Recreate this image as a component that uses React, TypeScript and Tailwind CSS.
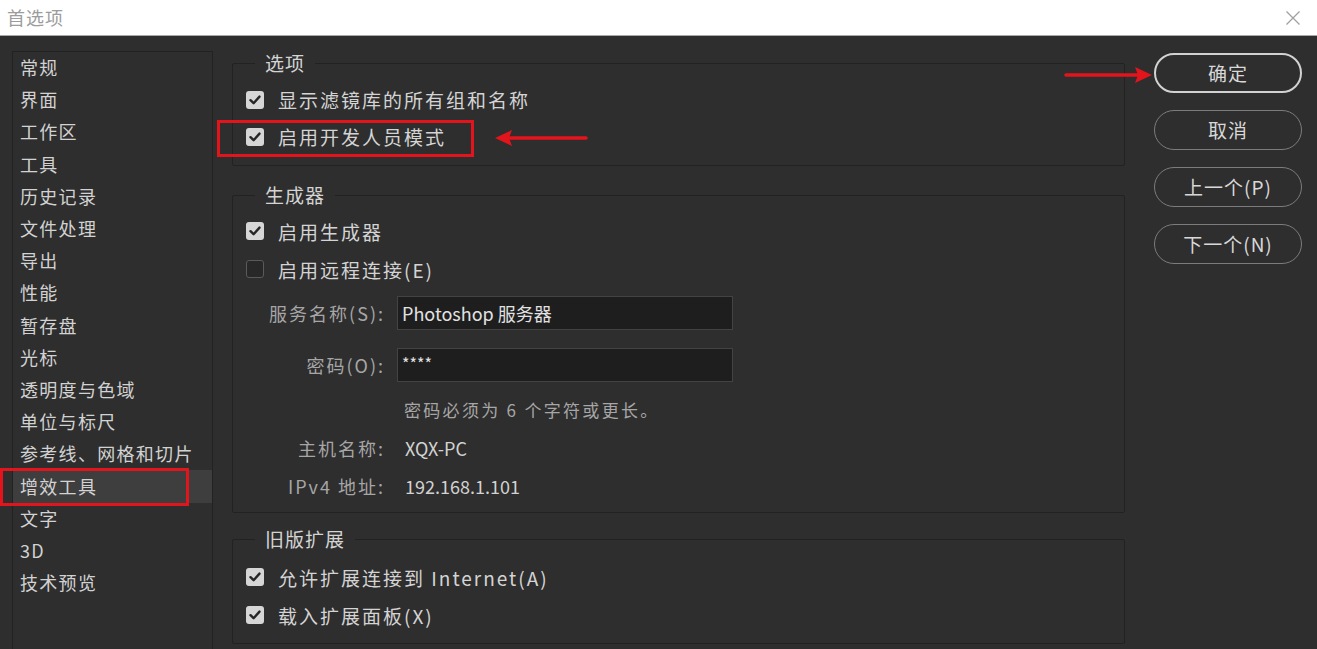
import type { ReactNode } from "react";

const FONT = { fontFamily: '"Noto Sans CJK SC", "Noto Sans", sans-serif' };

const NAV = [
  "常规",
  "界面",
  "工作区",
  "工具",
  "历史记录",
  "文件处理",
  "导出",
  "性能",
  "暂存盘",
  "光标",
  "透明度与色域",
  "单位与标尺",
  "参考线、网格和切片",
  "增效工具",
  "文字",
  "3D",
  "技术预览",
];

function Checkbox({ checked }: { checked: boolean }) {
  return checked ? (
    <span className="w-[18px] h-[18px] rounded-[3px] bg-[#d6d6d6] flex items-center justify-center shrink-0">
      <svg width="14" height="14" viewBox="0 0 14 14">
        <path d="M2.5 7.2 L5.6 10.2 L11.5 3.6" fill="none" stroke="#262626" strokeWidth="2.4" strokeLinecap="round" strokeLinejoin="round" />
      </svg>
    </span>
  ) : (
    <span className="w-[18px] h-[18px] rounded-[3px] border-[1.5px] border-[#5a5a5a] bg-[#282828] shrink-0" />
  );
}

function CheckRow({ checked, label, tight }: { checked: boolean; label: string; tight?: boolean }) {
  return (
    <div className={`${tight ? "h-[37px]" : "h-[38px]"} flex items-center pl-[13px] gap-[14px]`}>
      <Checkbox checked={checked} />
      <span className="text-[19px] tracking-[2px] text-[#d4d4d4] leading-none">{label}</span>
    </div>
  );
}

function Group({ title, children, className }: { title: string; children: ReactNode; className: string }) {
  return (
    <fieldset className={`border border-[#222222] rounded-[2px] ${className}`}>
      <legend className="ml-[22px] px-[10px] text-[19px] leading-[26px] tracking-[1px] text-[#d4d4d4]">{title}</legend>
      {children}
    </fieldset>
  );
}

function Label({ children }: { children: ReactNode }) {
  return (
    <span className="w-[152px] text-right text-[18px] tracking-[2px] text-[#a6a6a6] shrink-0">{children}</span>
  );
}

function NavButton({ label, primary }: { label: string; primary?: boolean }) {
  return (
    <button
      className={`h-[40px] w-full rounded-full text-[19px] tracking-[1px] text-[#d8d8d8] ${
        primary ? "border-2 border-[#d2d2d2]" : "border-[1.5px] border-[#7c7c7c]"
      }`}
    >
      {label}
    </button>
  );
}

export default function App() {
  return (
    <div className="w-[1317px] h-[649px] overflow-hidden bg-[#2e2e2e] relative" style={FONT}>
      {/* Title bar */}
      <div className="h-[36px] bg-white border-b border-[#a8a8a8] flex items-center justify-between pl-[7px] pr-[16px]">
        <span className="text-[18px] text-[#9c9c9c] tracking-[1px]">首选项</span>
        <svg width="16" height="16" viewBox="0 0 16 16">
          <path d="M1.5 1.5 L14.5 14.5 M14.5 1.5 L1.5 14.5" stroke="#a0a0a0" strokeWidth="1.3" />
        </svg>
      </div>

      <div className="flex pl-[12px]">
        {/* Sidebar */}
        <div className="w-[201px] h-[620px] mt-[15px] border border-[#222222] shrink-0">
          {NAV.map((n) => (
            <div
              key={n}
              className={`h-[32.2px] flex items-center pl-[7px] pb-[1px] text-[18px] tracking-[1.3px] text-[#d2d2d2] ${
                n === "增效工具" ? "bg-[#3e3e3e]" : ""
              }`}
            >
              {n}
            </div>
          ))}
        </div>

        {/* Content */}
        <div className="w-[893px] ml-[19px] shrink-0">
          <Group title="选项" className="mt-[14px] pt-[5px] pb-[10px]">
            <CheckRow checked tight label="显示滤镜库的所有组和名称" />
            <CheckRow checked tight label="启用开发人员模式" />
          </Group>

          <Group title="生成器" className="mt-[16px] pt-[4px] pb-[7px]">
            <CheckRow checked label="启用生成器" />
            <CheckRow checked={false} label="启用远程连接(E)" />
            <div className="flex items-center mt-[8px]">
              <Label>服务名称(S):</Label>
              <div className="ml-[12px] w-[336px] h-[34px] bg-[#1e1e1e] border border-[#434343] flex items-center pl-[4px] text-[18px] text-[#e2e2e2]">
                Photoshop 服务器
              </div>
            </div>
            <div className="flex items-center mt-[18px]">
              <Label>密码(O):</Label>
              <div className="ml-[12px] w-[336px] h-[34px] bg-[#1e1e1e] border border-[#434343] flex items-start pt-[2px] pl-[4px] text-[16px] text-[#e2e2e2]">
                ****
              </div>
            </div>
            <div className="h-[38px] mt-[9px] flex items-center pl-[171px] text-[17px] tracking-[2.3px] text-[#a6a6a6]">
              密码必须为 6 个字符或更长。
            </div>
            <div className="h-[38px] flex items-center">
              <Label>主机名称:</Label>
              <span className="ml-[20px] text-[18px] text-[#d2d2d2]">XQX-PC</span>
            </div>
            <div className="h-[38px] flex items-center">
              <Label>IPv4 地址:</Label>
              <span className="ml-[20px] text-[18px] text-[#d2d2d2]">192.168.1.101</span>
            </div>
          </Group>

          <Group title="旧版扩展" className="mt-[13px] pt-[6px] pb-[9px]">
            <CheckRow checked label="允许扩展连接到 Internet(A)" />
            <CheckRow checked label="载入扩展面板(X)" />
          </Group>
        </div>

        {/* Buttons */}
        <div className="w-[148px] ml-[29px] mt-[17px] flex flex-col gap-[17px] shrink-0">
          <NavButton label="确定" primary />
          <NavButton label="取消" />
          <NavButton label="上一个(P)" />
          <NavButton label="下一个(N)" />
        </div>
      </div>

      {/* Red annotations */}
      <div className="absolute left-[0px] top-[468px] w-[189px] h-[38px] border-[3px] border-[#e3141c]" />
      <div className="absolute left-[217px] top-[120px] w-[257px] h-[37px] border-[3px] border-[#e3141c]" />
      <svg className="absolute left-[494px] top-[128px]" width="94" height="20" viewBox="0 0 94 20">
        <path d="M16 10 L92 10" stroke="#e3141c" strokeWidth="3.5" strokeLinecap="round" />
        <path d="M1 10 L18 2 L15 10 L18 18 Z" fill="#e3141c" />
      </svg>
      <svg className="absolute left-[1064px] top-[65px]" width="90" height="20" viewBox="0 0 90 20">
        <path d="M2 10 L74 10" stroke="#e3141c" strokeWidth="3.5" strokeLinecap="round" />
        <path d="M88 10 L71 2 L74 10 L71 18 Z" fill="#e3141c" />
      </svg>
    </div>
  );
}
